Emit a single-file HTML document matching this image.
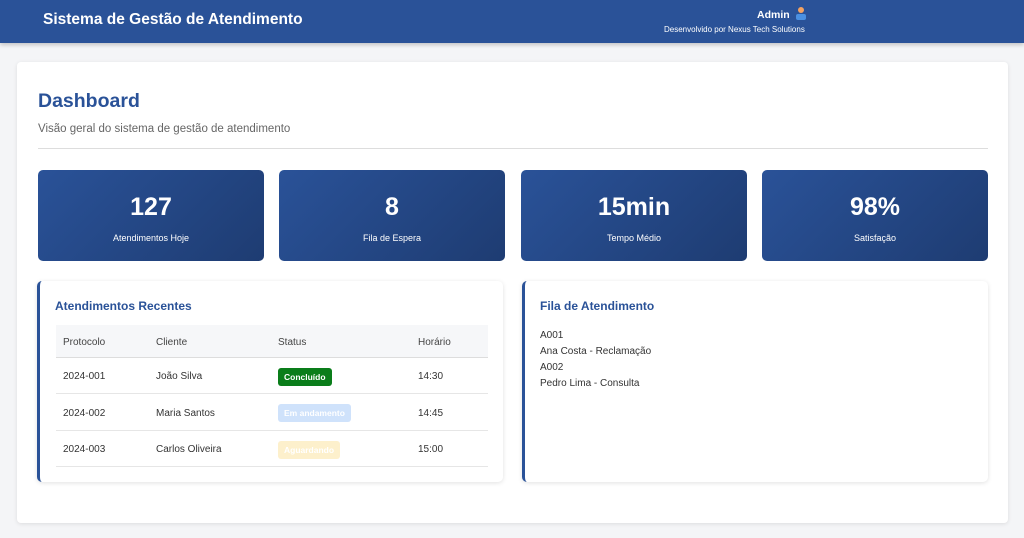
<!DOCTYPE html>
<html><head><meta charset="utf-8"><style>
*{box-sizing:border-box;margin:0;padding:0}
body{width:1024px;height:538px;background:#f4f5f7;font-family:"Liberation Sans",sans-serif;position:relative;overflow:hidden}
.hdr{position:absolute;left:0;top:0;width:1024px;height:43px;background:#2a5298;box-shadow:0 2px 4px rgba(0,0,0,.2)}
.hdr h1{position:absolute;left:43px;top:11px;color:#fff;font-size:15.5px;font-weight:bold}
.adm{position:absolute;left:757px;top:6px;color:#fff;font-size:10.5px;font-weight:bold}
.dev{position:absolute;left:664px;top:25px;color:#fff;font-size:8px}
.main{position:absolute;left:17px;top:62px;width:991px;height:461px;background:#fff;border-radius:4px;box-shadow:0 1px 4px rgba(0,0,0,.1)}
.main h2{position:absolute;left:21px;top:28px;color:#2a5298;font-size:19.5px;font-weight:bold}
.sub{position:absolute;left:21px;top:61px;color:#666;font-size:11.5px}
.hr{position:absolute;left:21px;top:86px;width:950px;height:1px;background:#ddd}
.card{position:absolute;top:108px;width:226px;height:91px;border-radius:5px;background:linear-gradient(135deg,#2a5298,#1e3c72);color:#fff;text-align:center}
.card b{display:block;font-size:25px;margin-top:23px}
.card span{display:block;font-size:9px;margin-top:11px}
.panel{position:absolute;top:219px;width:466px;height:201px;background:#fff;border-left:3px solid #2a5298;border-radius:5px;box-shadow:0 1px 5px rgba(0,0,0,.12)}
.panel h3{position:absolute;left:15px;top:18px;font-size:12px;color:#2a5298;font-weight:bold}
table{position:absolute;left:16px;top:44px;width:432px;border-collapse:collapse;font-size:10px;color:#333}
th{background:#f6f7f9;text-align:left;font-weight:normal;height:32px;padding-left:7px;padding-top:4px;border-bottom:1px solid #ddd;color:#444}
td{height:36.5px;padding-left:7px;padding-top:3px;border-bottom:1px solid #e6e6e6}
.b{display:inline-block;padding:4px 6px;border-radius:3px;font-size:8.5px;font-weight:bold;color:#fff}
.q{position:absolute;left:15px;top:47px;font-size:10px;color:#333;line-height:16px}
</style></head><body>
<div class="hdr"><h1>Sistema de Gestão de Atendimento</h1>
<div class="adm">Admin <svg width="12" height="14" viewBox="0 0 12 14" style="vertical-align:-2px;margin-left:2px"><circle cx="6" cy="4" r="3" fill="#f4a261"/><rect x="1" y="8" width="10" height="6" rx="2" fill="#4a90e2"/></svg></div>
<div class="dev">Desenvolvido por Nexus Tech Solutions</div></div>
<div class="main">
<h2>Dashboard</h2><div class="sub">Visão geral do sistema de gestão de atendimento</div><div class="hr"></div>
<div class="card" style="left:21px"><b>127</b><span>Atendimentos Hoje</span></div>
<div class="card" style="left:262px"><b>8</b><span>Fila de Espera</span></div>
<div class="card" style="left:504px"><b>15min</b><span>Tempo Médio</span></div>
<div class="card" style="left:745px"><b>98%</b><span>Satisfação</span></div>
<div class="panel" style="left:20px"><h3>Atendimentos Recentes</h3>
<table><tr><th style="width:93px">Protocolo</th><th style="width:122px">Cliente</th><th style="width:140px">Status</th><th>Horário</th></tr>
<tr><td>2024-001</td><td>João Silva</td><td><span class="b" style="background:#0a7d1a">Concluído</span></td><td>14:30</td></tr>
<tr><td>2024-002</td><td>Maria Santos</td><td><span class="b" style="background:#cfe2fb">Em andamento</span></td><td>14:45</td></tr>
<tr><td>2024-003</td><td>Carlos Oliveira</td><td><span class="b" style="background:#fdf0cc">Aguardando</span></td><td>15:00</td></tr></table></div>
<div class="panel" style="left:505px"><h3>Fila de Atendimento</h3>
<div class="q">A001<br>Ana Costa - Reclamação<br>A002<br>Pedro Lima - Consulta</div></div>
</div>
</body></html>
